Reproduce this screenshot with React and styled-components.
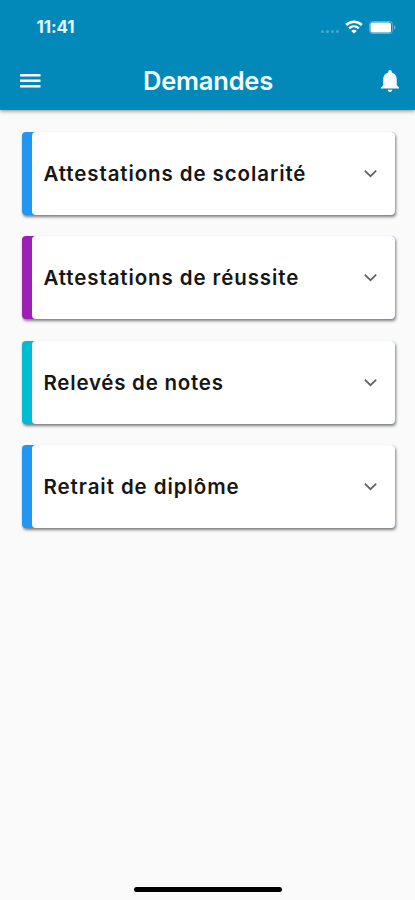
import React from "react"
import styled, { createGlobalStyle } from "styled-components"

const requests = [
  { id: 1, title: "Attestations de scolarité", color: "#2196f3", spacing: ".9px" },
  { id: 2, title: "Attestations de réussite", color: "#9c20b3", spacing: ".9px" },
  { id: 3, title: "Relevés de notes", color: "#00bcd4", spacing: ".76px" },
  { id: 4, title: "Retrait de diplôme", color: "#2196f3", spacing: ".93px" },
]

const StatusBar = () => (
  <StatusWrapper>
    <Time>11:41</Time>
    <StatusIcons>
      <Signal>
        <Dot />
        <Dot />
        <Dot />
        <Dot />
      </Signal>
      <svg width="18" height="14" viewBox="0 0 18 14" fill="none" stroke="#fff">
        <path d="M1.2 5C5.6.7 12.4.7 16.8 5" strokeWidth="2.6" />
        <path d="M4.2 8.3c2.8-2.6 6.8-2.6 9.6 0" strokeWidth="2.4" />
        <path d="M9 13.6 6.2 10.9c1.6-1.5 4-1.5 5.6 0z" fill="#fff" stroke="none" />
      </svg>
      <svg width="27" height="13" viewBox="0 0 27 13">
        <rect x=".5" y=".5" width="23" height="12" rx="3" fill="none" stroke="#fff" strokeOpacity=".35" />
        <rect x="1.5" y="1.5" width="20.5" height="10" rx="1.8" fill="#fff" />
        <path d="M25 4.3c2 .7 2 3.7 0 4.4z" fill="#fff" fillOpacity=".4" />
      </svg>
    </StatusIcons>
  </StatusWrapper>
)

const RequestCard = ({ title, color, spacing }) => (
  <Card $color={color}>
    <CardBody>
      <CardTitle $spacing={spacing}>{title}</CardTitle>
      <svg width="13" height="9" viewBox="0 0 13 9" fill="none" stroke="#646464" strokeWidth="1.8">
        <path d="M.8 1.7 6.5 7.2l5.7-5.5" />
      </svg>
    </CardBody>
  </Card>
)

const App = () => {
  return (
    <>
      <GlobalStyle />
      <Screen>
        <Header>
          <StatusBar />
          <NavBar>
            <IconButton aria-label="Menu">
              <svg width="21" height="14" viewBox="0 0 21 14" fill="#fff">
                <path d="M0 0h20.5v2.4H0zM0 5.5h20.5v2.4H0zM0 11h20.5v2.4H0z" />
              </svg>
            </IconButton>
            <Title>Demandes</Title>
            <IconButton aria-label="Notifications">
              <svg width="18" height="22" viewBox="4 2.5 16 19.5" fill="#fff" preserveAspectRatio="none">
                <path d="M12 22c1.1 0 2-.9 2-2h-4c0 1.1.89 2 2 2zm6-6v-5c0-3.07-1.64-5.64-4.5-6.32V4c0-.83-.67-1.5-1.5-1.5s-1.5.67-1.5 1.5v.68C7.63 5.36 6 7.92 6 11v5l-2 2v1h16v-1l-2-2z" />
              </svg>
            </IconButton>
          </NavBar>
        </Header>
        <List>
          {requests.map(({ id, ...item }) => (
            <RequestCard key={id} {...item} />
          ))}
        </List>
        <HomeIndicator />
      </Screen>
    </>
  )
}

export default App

const GlobalStyle = createGlobalStyle`
  * {
    box-sizing: border-box;
  }

  body {
    margin: 0;
    background-color: #fafafa;
    font-family: Inter, Roboto, sans-serif;
  }
`

const Screen = styled.div`
  display: flex;
  flex-direction: column;
  height: 900px;
  background-color: #fafafa;
`

const Header = styled.header`
  height: 109.5px;
  background-color: #0289ba;
  box-shadow: 0 1px 4px rgba(0, 0, 0, .45);
`

const StatusWrapper = styled.div`
  display: flex;
  justify-content: space-between;
  align-items: center;
  height: 54px;
  padding: 0 19px 0 36.5px;
`

const Time = styled.span`
  font-size: 17px;
  font-weight: 700;
  letter-spacing: -.1px;
  color: #e8f6fd;
`

const StatusIcons = styled.div`
  display: flex;
  align-items: center;
  gap: 6px;
`

const Signal = styled.div`
  display: flex;
  gap: 2px;
  padding-top: 9px;
`

const Dot = styled.span`
  width: 3px;
  height: 3px;
  border-radius: 50%;
  background-color: rgba(255, 255, 255, .28);
`

const NavBar = styled.div`
  display: flex;
  align-items: center;
  height: 54px;
  padding: 0 16px 0 20px;
`

const IconButton = styled.button`
  display: flex;
  padding: 0;
  border: 0;
  background: none;
`

const Title = styled.h1`
  flex: 1;
  margin: 0;
  padding-right: 6px;
  text-align: center;
  font-size: 25.5px;
  font-weight: 600;
  line-height: 1;
  letter-spacing: -.2px;
  color: #f4fbff;
`

const List = styled.main`
  display: flex;
  flex-direction: column;
  flex: 1;
  gap: 21.5px;
  padding: 22.2px 20px 0 22px;
`

const Card = styled.div`
  height: 83px;
  padding-left: 10px;
  border-radius: 4px;
  background-color: ${({ $color }) => $color};
  box-shadow: 1px 2px 3px rgba(0, 0, 0, .5);
`

const CardBody = styled.div`
  display: flex;
  justify-content: space-between;
  align-items: center;
  height: 100%;
  padding: 0 18px 0 11.5px;
  border-radius: 4px;
  background-color: #fff;
`

const CardTitle = styled.h2`
  margin: 0;
  padding-top: 2px;
  font-size: 20.5px;
  font-weight: 600;
  line-height: 1;
  letter-spacing: ${({ $spacing }) => $spacing};
  white-space: nowrap;
  color: #161616;
`

const HomeIndicator = styled.div`
  align-self: center;
  width: 148px;
  height: 5px;
  margin-bottom: 8px;
  border-radius: 3px;
  background-color: #000;
`
